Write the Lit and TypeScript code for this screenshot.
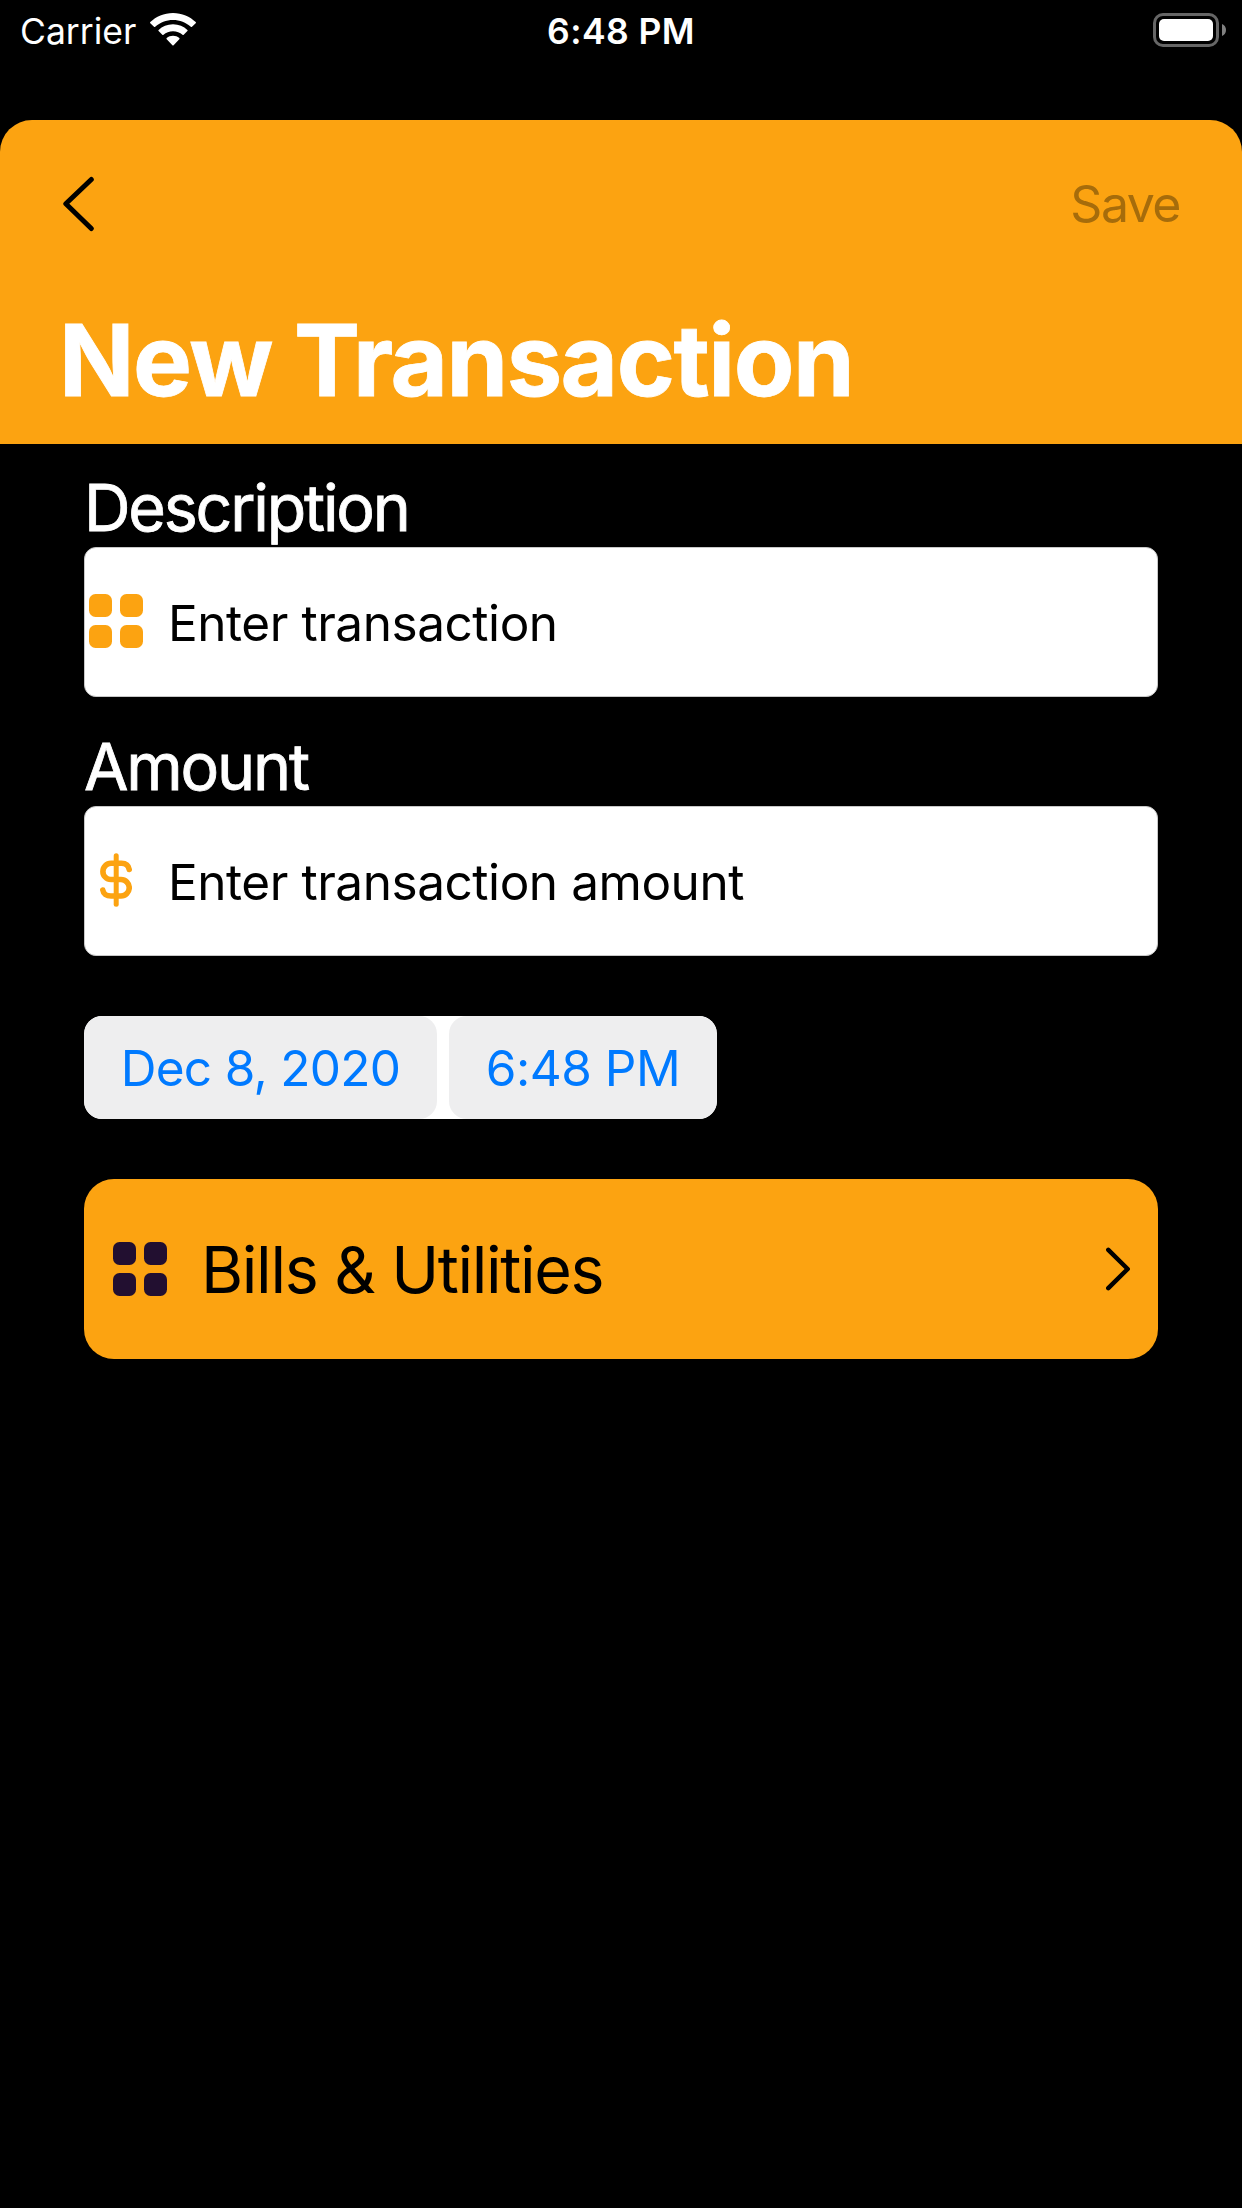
import { LitElement, html, svg, css } from "lit";
import { customElement, property } from "lit/decorators.js";

@customElement("grid-icon")
class GridIcon extends LitElement {
  static styles = css`
    :host { display: block; width: 54px; height: 54px; }
    svg { display: block; }
  `;
  render() {
    const cells = [[0, 0], [31, 0], [0, 31], [31, 31]];
    return html`<svg width="54" height="54" viewBox="0 0 54 54" fill="currentColor">
      ${cells.map(([x, y]) => svg`<rect x=${x} y=${y} width="23" height="23" rx="6.5"></rect>`)}
    </svg>`;
  }
}

@customElement("status-bar")
class StatusBar extends LitElement {
  static styles = css`
    :host {
      display: grid;
      grid-template-columns: 1fr auto 1fr;
      height: 62px;
      margin-bottom: 58px;
      padding: 0 16px;
      color: #fff;
      font-size: 35.5px;
      line-height: 64px;
    }
    .left { display: flex; padding-left: 4px; }
    .wifi { margin: 13px 0 0 14px; }
    .time { font-weight: 600; letter-spacing: 0.4px; }
    .right { display: flex; justify-content: flex-end; }
    .battery { margin-top: 13px; }
  `;
  render() {
    return html`
      <div class="left">
        <span class="carrier">Carrier</span>
        <svg class="wifi" width="46" height="34" viewBox="0 0 46 34" fill="#fff">
          <path d="M23 0C14 0 6 3.6 0.3 9.1Q-0.2 9.7 0.3 10.2L4 13.8Q4.6 14.3 5.2 13.8C10 9.4 16.2 6.900 23 6.900S36 9.400 40.800 13.800Q41.400 14.300 42 13.800L45.700 10.200Q46.200 9.700 45.700 9.100C40 3.600 32 0 23 0Z" />
          <path d="M23 11.200C17.300 11.200 12.300 13.400 8.600 16.900Q8 17.500 8.600 18.100L12.300 21.800Q12.900 22.300 13.500 21.800C16 19.600 19.300 18.200 23 18.200S30 19.600 32.500 21.800Q33.100 22.300 33.700 21.800L37.400 18.100Q38 17.500 37.400 16.900C33.700 13.400 28.700 11.200 23 11.200Z" />
          <path d="M23 22.800C20.600 22.800 18.400 23.600 16.700 25Q16.100 25.600 16.700 26.200L22.400 32.300Q23 32.900 23.600 32.300L29.300 26.200Q29.900 25.600 29.300 25C27.600 23.600 25.400 22.800 23 22.800Z" />
        </svg>
      </div>
      <span class="time">6:48 PM</span>
      <div class="right">
        <svg class="battery" width="73" height="34" viewBox="0 0 73 34">
          <rect x="1.500" y="1.500" width="63" height="31" rx="8.500" fill="none" stroke="#666" stroke-width="3" />
          <rect x="6" y="6" width="54" height="22" rx="5" fill="#fff" />
          <path d="M69 11C71.500 12 73 14.300 73 17S71.500 22 69 23Z" fill="#808080" />
        </svg>
      </div>
    `;
  }
}

@customElement("text-field")
class TextField extends LitElement {
  @property() label = "";
  @property() placeholder = "";
  static styles = css`
    :host { display: block; }
    .label {
      display: block;
      height: 79px;
      line-height: 81px;
      font-size: 64.5px;
      color: #fff;
      letter-spacing: -2.2px;
      -webkit-text-stroke: 0.8px #fff;
    }
    .box {
      box-sizing: border-box;
      display: flex;
      align-items: center;
      height: 150px;
      padding-left: 4px;
      background: #fff;
      border: 1px solid #c8c8c8;
      border-radius: 12px;
    }
    .icon { display: flex; width: 54px; padding-bottom: 2px; justify-content: center; }
    .input {
      flex: 1;
      min-width: 0;
      margin: 0 24px 0 25px;
      padding: 2px 0 0;
      border: 0;
      outline: 0;
      background: none;
      font: inherit;
      font-size: 49.5px;
      line-height: 70px;
      height: 72px;
      box-sizing: border-box;
      letter-spacing: -0.45px;
    }
    .input::placeholder { color: #000; opacity: 1; }
  `;
  render() {
    return html`
      <label class="label" for="field">${this.label}</label>
      <div class="box">
        <span class="icon"><slot></slot></span>
        <input class="input" id="field" placeholder=${this.placeholder} />
      </div>
    `;
  }
}

@customElement("app-root")
class AppRoot extends LitElement {
  static styles = css`
    :host {
      display: block;
      min-height: 2208px;
      background: #000;
      font-family: Inter, "Liberation Sans", sans-serif;
    }
    .header {
      box-sizing: border-box;
      height: 324px;
      padding: 0 62px 0 59px;
      background: #fca311;
      border-radius: 32px 32px 0 0;
    }
    .nav {
      display: flex;
      align-items: center;
      justify-content: space-between;
      height: 168px;
    }
    .back, .save { display: block; padding: 0; border: 0; background: none; font: inherit; }
    .back { padding-left: 3px; }
    .back svg, .chevron, .dollar { display: block; }
    .save { font-size: 50px; line-height: 60px; color: #a66c0b; letter-spacing: -1.5px; }
    .title {
      margin: 0;
      font-size: 99px;
      line-height: 144px;
      font-weight: 700;
      color: #fff;
      letter-spacing: -1.45px;
      -webkit-text-stroke: 0.8px #fff;
    }
    .form { padding: 24px 84px 0; }
    .amount { margin-top: 30px; }
    .brand { color: #fca311; }
    .when {
      display: flex;
      gap: 12px;
      width: 633px;
      height: 103px;
      margin-top: 60px;
      background: #fff;
      border-radius: 18px;
      overflow: hidden;
    }
    .pill {
      padding: 2px 0 0;
      border: 0;
      border-radius: 18px;
      background: #eeeeef;
      color: #007aff;
      font: inherit;
      font-size: 49.5px;
      line-height: 101px;
      white-space: nowrap;
    }
    .date { width: 353px; letter-spacing: -0.7px; }
    .clock { width: 268px; letter-spacing: -0.5px; }
    .category {
      display: flex;
      align-items: center;
      box-sizing: border-box;
      width: 100%;
      height: 180px;
      margin-top: 60px;
      padding: 0 27px 0 29px;
      border: 0;
      border-radius: 30px;
      background: #fca311;
      color: #000;
      font: inherit;
      font-size: 64.5px;
      text-align: left;
    }
    .tile { color: #220f30; }
    .name { flex: 1; margin-left: 34px; padding-top: 2px; letter-spacing: -1.35px; }
  `;
  render() {
    return html`
      <status-bar></status-bar>
      <header class="header">
        <div class="nav">
          <button class="back" aria-label="Back">
            <svg width="34" height="56" viewBox="0 0 34 56" fill="none" stroke="#000" stroke-width="5" stroke-linecap="round" stroke-linejoin="round">
              <path d="M29.300 3.500L3.800 27.800L29.300 52.500" />
            </svg>
          </button>
          <button class="save" disabled>Save</button>
        </div>
        <h1 class="title">New Transaction</h1>
      </header>
      <main class="form">
        <text-field class="description" label="Description" placeholder="Enter transaction">
          <grid-icon class="brand"></grid-icon>
        </text-field>
        <text-field class="amount" label="Amount" placeholder="Enter transaction amount">
          <svg class="dollar" width="32" height="54" viewBox="0 0 32 54" fill="none" stroke="#fca311" stroke-linecap="round">
            <path stroke-width="5" d="M16.200 2.700V51.300" />
            <path stroke-width="5.600" d="M29.200 16.500C28.500 12.500 25.700 10.300 21.500 10.300H11A8.100 8.100 0 0 0 11 26.500H21A8.250 8.250 0 0 1 21 43H11C6.500 43 3.300 40.800 2.800 37" />
          </svg>
        </text-field>
        <div class="when">
          <button class="pill date">Dec 8, 2020</button>
          <button class="pill clock">6:48 PM</button>
        </div>
        <button class="category">
          <grid-icon class="tile"></grid-icon>
          <span class="name">Bills &amp; Utilities</span>
          <svg class="chevron" width="26" height="44" viewBox="0 0 26 44" fill="none" stroke="#000" stroke-width="4.500" stroke-linecap="round" stroke-linejoin="round">
            <path d="M3.300 2.800L22.700 22L3.300 41.200" />
          </svg>
        </button>
      </main>
    `;
  }
}
